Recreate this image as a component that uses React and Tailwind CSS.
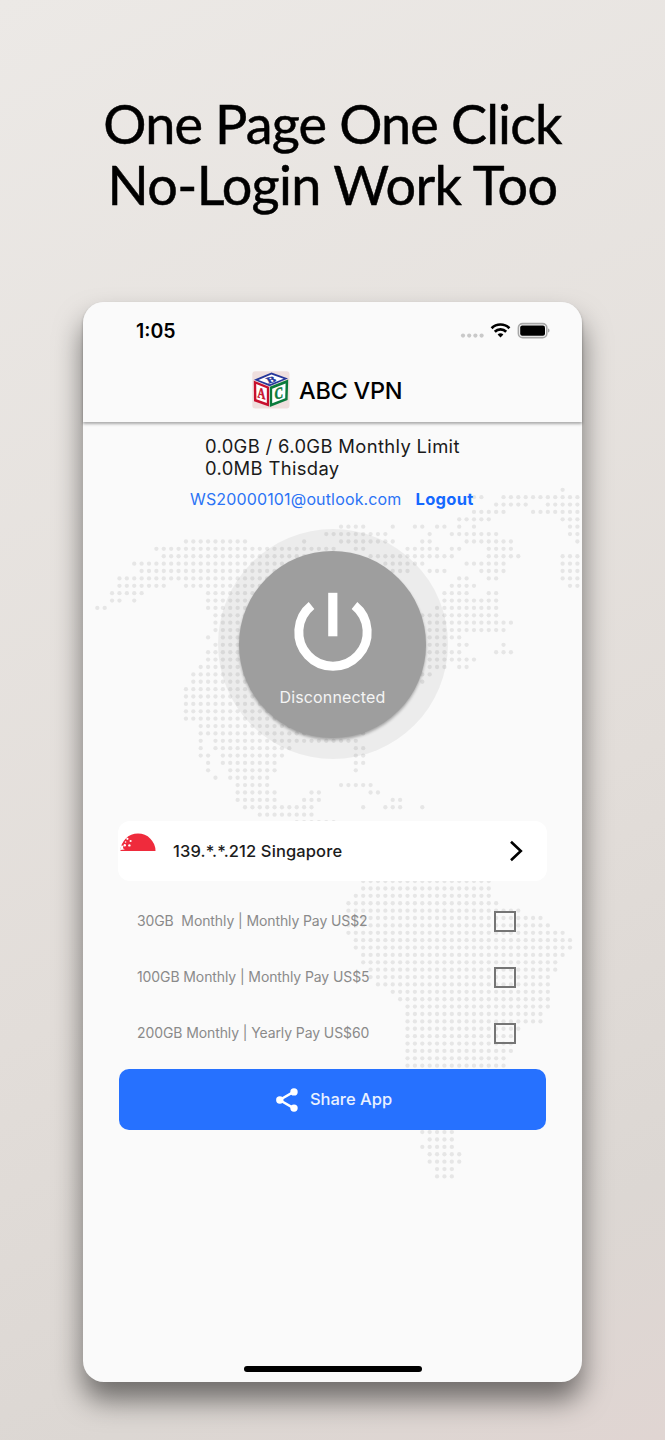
import React from "react";

// Dotted world map: each row lists [firstColumn, lastColumn] runs.
const MAP = [
  [[63, 63]],
  [[51, 52], [55, 65]],
  [[54, 58], [61, 65]],
  [[51, 55], [59, 65]],
  [[49, 53], [63, 65]],
  [[33, 36], [40, 40], [43, 44], [46, 47], [49, 49], [51, 51], [64, 65]],
  [[31, 39], [45, 45], [48, 54], [64, 65]],
  [[12, 20], [28, 28], [33, 40], [44, 45], [50, 56], [65, 65]],
  [[8, 32], [35, 36], [42, 46], [48, 49], [53, 56]],
  [[9, 30], [37, 48], [53, 57], [63, 65]],
  [[5, 30], [39, 44], [50, 55], [63, 65]],
  [[6, 30], [40, 42], [45, 47], [52, 55], [63, 65]],
  [[3, 30], [49, 50], [53, 54], [63, 65]],
  [[3, 9], [12, 30], [48, 51], [64, 65]],
  [[2, 6], [15, 30], [47, 50], [53, 54]],
  [[2, 3], [5, 5], [15, 30], [47, 54]],
  [[0, 1], [15, 30], [46, 54]],
  [[16, 30], [44, 54]],
  [[16, 30], [45, 56]],
  [[16, 30], [45, 55]],
  [[15, 15], [17, 30], [45, 49]],
  [[16, 30], [45, 47], [49, 50], [55, 55]],
  [[15, 30], [45, 49], [54, 56]],
  [[15, 30], [45, 51]],
  [[14, 30], [45, 47], [49, 50]],
  [[13, 30], [44, 45]],
  [[13, 30], [44, 44]],
  [[12, 30]],
  [[12, 30]],
  [[12, 30]],
  [[12, 30]],
  [[12, 30]],
  [[14, 30]],
  [[14, 32], [36, 36]],
  [[14, 14], [16, 35]],
  [[14, 14], [16, 26], [35, 36]],
  [[14, 15], [17, 25], [35, 36]],
  [[15, 15], [17, 24], [35, 36]],
  [[15, 15], [18, 24], [35, 35]],
  [[16, 16], [18, 23]],
  [[19, 23], [33, 37]],
  [[19, 24], [29, 30], [37, 38]],
  [[19, 24], [28, 30], [40, 41]],
  [[20, 29], [36, 36], [39, 41], [44, 44]],
  [[22, 29]],
  [[27, 32]],
  [], [], [], [], [], [], [],
  [[36, 53]],
  [[36, 53]],
  [[35, 53]],
  [[34, 54]],
  [[34, 57]],
  [[34, 60]],
  [[34, 61]],
  [[34, 63]],
  [[35, 64]],
  [[35, 64]],
  [[36, 63]],
  [[36, 62]],
  [[37, 62]],
  [[37, 61]],
  [[38, 61]],
  [[40, 61]],
  [[41, 61]],
  [[42, 61]],
  [[42, 60]],
  [[42, 60]],
  [[42, 57]],
  [[42, 56]],
  [[42, 56]],
  [[42, 56]],
  [[42, 55]],
  [[42, 55]],
  [], [], [], [], [], [], [], [],
  [[44, 48]],
  [[45, 48]],
  [[44, 48]],
  [[45, 49]],
  [[45, 49]],
  [[46, 48]],
  [[46, 48]],
];

function WorldMap() {
  const dots = [];
  MAP.forEach((runs, r) => {
    runs.forEach(([a, b]) => {
      for (let c = a; c <= b; c++) {
        dots.push(<circle key={`${r}-${c}`} cx={14.3 + c * 7.386} cy={187.8 + r * 7.383} r="2.15" />);
      }
    });
  });
  return (
    <svg className="pointer-events-none absolute inset-0 h-full w-full" fill="#e6e6e6" aria-hidden="true">
      {dots}
    </svg>
  );
}

function StatusIcons() {
  return (
    <svg width="92" height="20" viewBox="0 0 92 20" aria-hidden="true">
      <g fill="#c9c9c9">
        <circle cx="4" cy="14.6" r="2.1" />
        <circle cx="10.2" cy="14.6" r="2.1" />
        <circle cx="16.4" cy="14.6" r="2.1" />
        <circle cx="22.6" cy="14.6" r="2.1" />
      </g>
      <g fill="none" stroke="#000" strokeWidth="2.7">
        <path d="M32.6 7.2 a12.6 12.6 0 0 1 17.8 0" />
        <path d="M35.8 10.8 a8.1 8.1 0 0 1 11.4 0" />
      </g>
      <path d="M41.5 16.6 L38.6 13.6 a4.2 4.2 0 0 1 5.8 0 Z" fill="#000" />
      <rect x="59.4" y="2.6" width="28.4" height="14" rx="4.2" fill="none" stroke="#a8a8a8" strokeWidth="1.6" />
      <rect x="61.2" y="4.4" width="24.8" height="10.4" rx="2" fill="#000" />
      <path d="M89 7.6 c2 .6 2 3.4 0 4 Z" fill="#a8a8a8" />
    </svg>
  );
}

function BlocksLogo() {
  return (
    <svg width="38" height="38" viewBox="0 0 38 38" aria-hidden="true">
      <rect x="0.3" y="0.3" width="37.2" height="37.2" rx="3" fill="#efdfde" />
      <path d="M2 8.8 L19.5 1.6 L36 7.6 L17.6 15.2 Z" fill="#26379a" />
      <path d="M6.5 8.9 L19.4 3.6 L31.6 7.8 L17.8 13.3 Z" fill="#fff" />
      <path d="M1.8 9.6 L17 15.8 V35.6 L2 30.2 Z" fill="#c8102e" />
      <path d="M4.2 13 L14.8 17.2 V32 L4.4 28.2 Z" fill="#fff" />
      <path d="M17.8 15.8 L36.2 8.6 L35.6 29 L17.8 36 Z" fill="#0b7a3c" />
      <path d="M20.2 17.8 L33.6 12.4 L33.2 27.2 L20.2 32.2 Z" fill="#fff" />
      <g fontFamily="Liberation Serif, serif" fontWeight="700" textAnchor="middle">
        <text transform="matrix(.72 .2 0 1 9.5 27.4)" fontSize="15" fill="#c8102e" stroke="#c8102e" strokeWidth=".5">A</text>
        <text transform="matrix(.74 -.2 0 1 26.8 27.6)" fontSize="16" fill="#0b7a3c" stroke="#0b7a3c" strokeWidth=".6">C</text>
        <text transform="matrix(1.15 -.3 .45 .72 20.8 11.3)" fontSize="11" fill="#26379a" stroke="#26379a" strokeWidth=".4">B</text>
      </g>
    </svg>
  );
}

function Header() {
  return (
    <header className="relative h-[120px] rounded-t-[21px] bg-[#fafafa] shadow-[0_2px_3px_rgba(0,0,0,0.32)]">
      <div className="flex h-[57px] items-center justify-between pr-[31px] pl-[53px]">
        <span className="pt-[3px] text-[19.5px] font-semibold text-black">1:05</span>
        <StatusIcons />
      </div>
      <div className="flex h-[62px] items-center pl-[169px]">
        <BlocksLogo />
        <h1 className="mt-[1px] ml-[9px] text-[23.5px] font-medium tracking-[-0.25px] text-black">ABC VPN</h1>
      </div>
    </header>
  );
}

function PowerButton() {
  return (
    <button className="mx-auto mt-[17px] flex h-[230px] w-[230px] shrink-0 items-center justify-center rounded-full bg-black/[0.055]">
      <span className="flex h-[187px] w-[187px] flex-col items-center rounded-full bg-[#9e9e9e] pt-[40px] shadow-[0_2px_3px_rgba(0,0,0,0.3)]">
        <svg width="80" height="80" viewBox="0 0 80 80" aria-hidden="true">
          <path d="M18.5 14.5 A34.2 34.2 0 1 0 61.5 14.5" fill="none" stroke="#fff" strokeWidth="9" />
          <rect x="35.2" y="1.8" width="9.2" height="43.5" fill="#fff" />
        </svg>
        <span className="mt-[14px] text-[16px] leading-6 tracking-[0.15px] text-[#f4f4f4]">Disconnected</span>
      </span>
    </button>
  );
}

function SingaporeFlag() {
  return (
    <svg width="36" height="36" viewBox="0 0 36 36" aria-hidden="true">
      <path d="M0.5 18 A17.5 17.5 0 0 1 35.5 18 Z" fill="#ef2b3c" />
      <path d="M1.4 12.4 L3.4 12.8 L3 15.2 L4.8 16.6 L0 17 Z" fill="#fff" />
      <g fill="#fff">
        <circle cx="7.4" cy="5.8" r="1.1" />
        <circle cx="10.6" cy="8" r="1.1" />
        <circle cx="4.8" cy="12.2" r="1.2" />
        <circle cx="9.4" cy="12.4" r="1.2" />
        <circle cx="5.6" cy="9" r="0.8" />
      </g>
    </svg>
  );
}

function ServerCard() {
  return (
    <button className="relative mx-auto mt-[62px] flex h-[60px] w-[429px] shrink-0 items-center rounded-[12px] bg-white">
      <span className="ml-[2px]">
        <SingaporeFlag />
      </span>
      <span className="mt-[1px] ml-[17px] text-[16.5px] font-[450] tracking-[0.12px] text-[#1c1c1c]">139.*.*.212 Singapore</span>
      <svg className="mr-[22px] ml-auto" width="18" height="24" viewBox="0 0 18 24" aria-hidden="true">
        <path d="M4 2.8 L13.8 12 L4 21.2" fill="none" stroke="#000" strokeWidth="2.6" />
      </svg>
    </button>
  );
}

const PLANS = [
  { label: "30GB  Monthly | Monthly Pay US$2" },
  { label: "100GB Monthly | Monthly Pay US$5" },
  { label: "200GB Monthly | Yearly Pay US$60" },
];

function Plans() {
  return (
    <ul className="mt-[12px] pr-[66px] pl-[54px]">
      {PLANS.map((p) => (
        <li key={p.label} className="flex h-[56px] items-center justify-between">
          <span className="pb-px text-[14px] tracking-[-0.1px] whitespace-pre text-[#8a8a8a]">{p.label}</span>
          <span className="h-[21px] w-[22px] border-2 border-[#757575]" />
        </li>
      ))}
    </ul>
  );
}

function ShareButton() {
  return (
    <button className="mx-auto mt-[8px] flex h-[61px] w-[427px] shrink-0 items-center justify-center rounded-[10px] bg-[#2671ff]">
      <svg className="ml-[2px]" width="24" height="26" viewBox="0 0 24 26" aria-hidden="true">
        <path d="M19.5 4.4 L4.6 13 L19.5 21.6" fill="none" stroke="#fff" strokeWidth="2.4" />
        <g fill="#fff">
          <circle cx="19" cy="4.9" r="3.7" />
          <circle cx="4.8" cy="13" r="3.7" />
          <circle cx="19" cy="21.1" r="3.7" />
        </g>
      </svg>
      <span className="ml-[11px] text-[16.5px] font-medium text-[#eaf1ff]">Share App</span>
    </button>
  );
}

export default function App() {
  return (
    <div className="flex h-[1440px] w-[665px] flex-col items-center overflow-hidden bg-[linear-gradient(155deg,#ece9e6_0%,#e2ddd9_60%,#dcd7d3_85%,#e0d5d2_100%)] font-[Inter,'Liberation_Sans',sans-serif]">
      <div className="flex h-[302px] shrink-0 flex-col items-center pt-[93px] font-[Lato,sans-serif] text-[54px] leading-[61px] text-black [-webkit-text-stroke:0.5px_black]">
        <p className="tracking-[-0.85px] whitespace-nowrap">One Page One Click</p>
        <p className="tracking-[-0.65px] whitespace-nowrap">No-Login Work Too</p>
      </div>

      <main className="relative flex h-[1080px] w-[499px] shrink-0 flex-col rounded-[21px] bg-[#fafafa] shadow-[0_18px_28px_rgba(0,0,0,0.5)]">
        <WorldMap />
        <Header />

        <div className="relative mt-[13px] pl-[122px] text-[18.4px] leading-[22px] tracking-[0.35px] text-[#1a1a1a]">
          <p>0.0GB / 6.0GB Monthly Limit</p>
          <p>0.0MB Thisday</p>
        </div>
        <div className="relative mt-[8px] mb-[1px] flex h-[24px] items-center pl-[107px] text-[16px] tracking-[0.15px] text-[#2b73f5]">
          <span>WS20000101@outlook.com</span>
          <span className="ml-[14px] text-[16.5px] font-bold tracking-[0.3px] text-[#1468ff]">Logout</span>
        </div>

        <div className="relative flex flex-col">
          <PowerButton />
          <ServerCard />
          <Plans />
          <ShareButton />
        </div>

        <div className="mx-auto mt-auto mb-[10px] h-[6px] w-[178px] rounded-full bg-black" />
      </main>
    </div>
  );
}
